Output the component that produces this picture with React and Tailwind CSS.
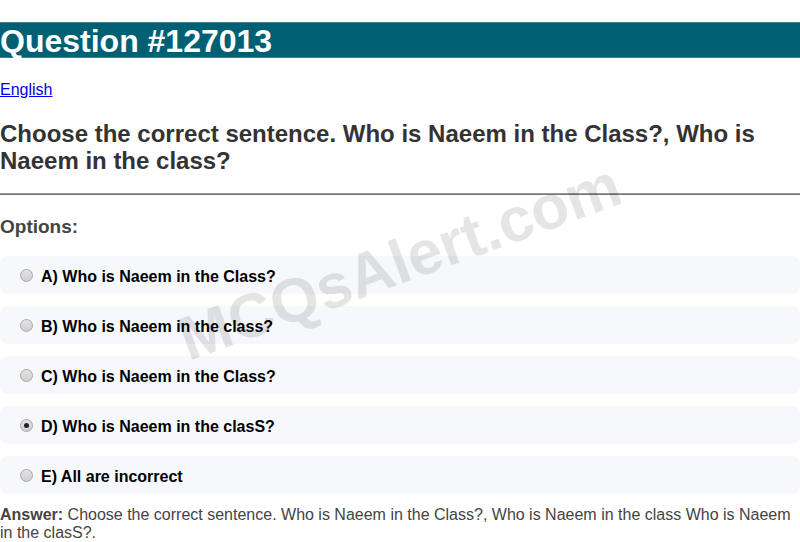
import React from "react";

const options = [
  { label: "A) Who is Naeem in the Class?", checked: false },
  { label: "B) Who is Naeem in the class?", checked: false },
  { label: "C) Who is Naeem in the Class?", checked: false },
  { label: "D) Who is Naeem in the clasS?", checked: true },
  { label: "E) All are incorrect", checked: false },
];

function Radio({ checked }) {
  return (
    <span className="w-[13px] h-[13px] rounded-full border border-[#a8a8a8] bg-gradient-to-b from-[#e4e4e4] to-[#cfcfcf] flex items-center justify-center shrink-0">
      {checked && <span className="w-[5px] h-[5px] rounded-full bg-[#222]"></span>}
    </span>
  );
}

export default function App() {
  return (
    <div
      className="relative w-[800px] h-[542px] overflow-hidden bg-white"
      style={{ fontFamily: '"Liberation Sans", Arial, sans-serif' }}
    >
      <div className="pt-[22px]">
        <h1 className="bg-[#006073] text-white font-bold text-[32px] leading-[36px] h-[36px] border-y border-[#8fb3bc]/40">
          Question #127013
        </h1>
        <div className="mt-[23px] h-[18px] leading-[18px] text-[16px]">
          <a href="#" className="text-[#0000ee] underline">English</a>
        </div>
        <h2 className="mt-[21px] text-[24px] leading-[27px] font-bold text-[#333]">
          Choose the correct sentence. Who is Naeem in the Class?, Who is Naeem in the class?
        </h2>
        <div className="mt-[19px] h-[2px] bg-[#777] border-t border-[#999]"></div>
        <h3 className="mt-[21px] text-[19px] leading-[22px] font-bold text-[#444]">Options:</h3>
        <div className="mt-[18px] flex flex-col gap-[12px]">
          {options.map((o, i) => (
            <div
              key={i}
              className="h-[38px] rounded-lg bg-[#f7f8fc] flex items-center pl-[20px]"
            >
              <Radio checked={o.checked} />
              <span className="ml-[8px] mt-[4px] leading-[18px] text-[16px] font-bold text-black">{o.label}</span>
            </div>
          ))}
        </div>
        <p className="mt-[12px] text-[16px] leading-[18px] text-[#444]">
          <b>Answer:</b> Choose the correct sentence. Who is Naeem in the Class?, Who is Naeem in the class Who is Naeem in the clasS?.
        </p>
      </div>
      <div className="pointer-events-none absolute left-0 top-0 w-[800px] h-[542px] flex items-center justify-center">
        <div className="rotate-[-20deg] text-[62px] font-bold text-black/10 whitespace-nowrap -translate-y-[10px]">
          MCQsAlert.com
        </div>
      </div>
    </div>
  );
}
